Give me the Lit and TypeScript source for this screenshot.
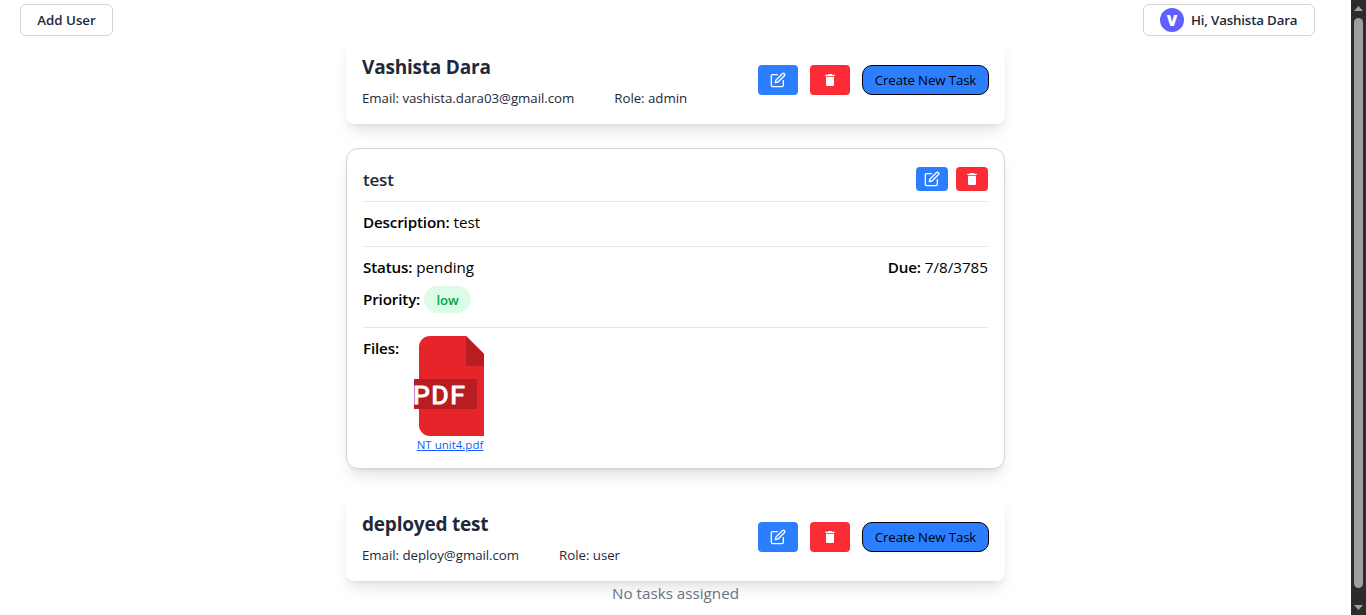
import { LitElement, html, svg, css, nothing } from "lit";
import { customElement, property } from "lit/decorators.js";

interface Task {
  title: string;
  description: string;
  status: string;
  due: string;
  priority: string;
  files: string[];
}

interface User {
  name: string;
  email: string;
  role: string;
  tasks: Task[];
}

const users: User[] = [
  {
    name: "Vashista Dara",
    email: "vashista.dara03@gmail.com",
    role: "admin",
    tasks: [
      {
        title: "test",
        description: "test",
        status: "pending",
        due: "7/8/3785",
        priority: "low",
        files: ["NT unit4.pdf"],
      },
    ],
  },
  { name: "deployed test", email: "deploy@gmail.com", role: "user", tasks: [] },
];

const editIcon = svg`<svg width="16" height="16" viewBox="0 0 24 24" fill="none" stroke="currentColor" stroke-width="2" stroke-linecap="round" stroke-linejoin="round">
  <path d="M11 4H4a2 2 0 0 0-2 2v14a2 2 0 0 0 2 2h14a2 2 0 0 0 2-2v-7"></path>
  <path d="M18.5 2.5a2.121 2.121 0 0 1 3 3L12 15l-4 1 1-4 9.5-9.5z"></path>
</svg>`;

const trashIcon = svg`<svg width="16" height="16" viewBox="0 0 24 24" fill="currentColor">
  <path d="M6 19c0 1.1.9 2 2 2h8c1.1 0 2-.9 2-2V7H6v12zM19 4h-3.5l-1-1h-5l-1 1H5v2h14V4z"></path>
</svg>`;

const pdfIcon = svg`<svg width="70" height="100" viewBox="0 0 70 100">
  <path d="M16 0H52L70 18V100H16A11 11 0 0 1 5 89V11A11 11 0 0 1 16 0Z" fill="#e5252a"></path>
  <path d="M52 0L70 18V30H54A2 2 0 0 1 52 28Z" fill="#b71d21"></path>
  <path d="M0 43H61A2 2 0 0 1 63 45V71A2 2 0 0 1 61 73H0Z" fill="#b71d21"></path>
  <text class="pdf" x="-1" y="67.5" textLength="52" lengthAdjust="spacing">PDF</text>
</svg>`;

const base = css`
  * {
    box-sizing: border-box;
    margin: 0;
  }
  svg {
    display: block;
    flex: none;
  }
  button {
    font: inherit;
    color: inherit;
    padding: 0;
    border: 0;
    display: flex;
    align-items: center;
    justify-content: center;
    white-space: nowrap;
  }
  .icon {
    width: 40px;
    height: 30px;
    border-radius: 4px;
    color: #fff;
  }
  .small {
    width: 32px;
    height: 24px;
  }
  .edit {
    background: #2b7fff;
  }
  .delete {
    background: #fb2c36;
  }
`;

@customElement("task-card")
class TaskCard extends LitElement {
  @property({ attribute: false }) task!: Task;

  static styles = [
    base,
    css`
      :host {
        display: block;
        box-sizing: border-box;
        padding: 16px;
        border: 1px solid #d1d5dc;
        border-radius: 12px;
        background: #fff;
        box-shadow: 0 10px 15px -3px rgb(0 0 0 / 0.1), 0 4px 6px -4px rgb(0 0 0 / 0.1);
      }
      .head,
      .row,
      .actions {
        display: flex;
        justify-content: space-between;
        align-items: center;
      }
      .actions {
        gap: 8px;
      }
      .head {
        height: 37px;
        padding-bottom: 8px;
        border-bottom: 1px solid #e5e7eb;
      }
      h3 {
        font-size: 17px;
        line-height: 28px;
        font-weight: 600;
        letter-spacing: -0.2px;
        color: #1e2939;
        padding-top: 1px;
      }
      b {
        font-weight: 600;
        letter-spacing: -0.15px;
      }
      .desc {
        padding: 8px 0 12px;
        border-bottom: 1px solid #e5e7eb;
      }
      .meta {
        display: flex;
        flex-direction: column;
        gap: 8px;
        padding: 8px 0 16px;
        border-bottom: 1px solid #e5e7eb;
      }
      .line {
        height: 24px;
        line-height: 24px;
      }
      .priority {
        display: flex;
        align-items: center;
        gap: 4px;
      }
      .badge {
        width: 47px;
        height: 27px;
        border-radius: 14px;
        background: #dcfce7;
        color: #00a63e;
        font-size: 13.2px;
        line-height: 28px;
        font-weight: 600;
        text-align: center;
      }
      .files {
        display: flex;
        gap: 16px;
        padding-top: 8px;
      }
      .files .line {
        width: 35px;
      }
      .file {
        width: 70px;
      }
      .pdf {
        font-family: "Roboto", sans-serif;
        font-size: 26.5px;
        font-weight: 400;
        fill: #fff;
        stroke: #fff;
        stroke-width: 1.1px;
        stroke-linejoin: round;
      }
      a {
        display: flex;
        justify-content: center;
        width: 72px;
        padding-top: 1px;
        font-size: 11.5px;
        line-height: 15px;
        white-space: nowrap;
        color: #155dfc;
      }
    `,
  ];

  render() {
    const t = this.task;
    return html`
      <div class="head">
        <h3>${t.title}</h3>
        <div class="actions">
          <button class="icon small edit" aria-label="Edit task">${editIcon}</button>
          <button class="icon small delete" aria-label="Delete task">${trashIcon}</button>
        </div>
      </div>
      <div class="desc"><p class="line"><b>Description:</b> ${t.description}</p></div>
      <div class="meta">
        <div class="row">
          <p class="line"><b>Status:</b> ${t.status}</p>
          <p class="line"><b>Due:</b> ${t.due}</p>
        </div>
        <div class="line priority"><b>Priority:</b><span class="badge">${t.priority}</span></div>
      </div>
      <div class="files">
        <b class="line">Files:</b>
        ${t.files.map((f) => html`<div class="file">${pdfIcon}<a href="#">${f}</a></div>`)}
      </div>
    `;
  }
}

@customElement("user-card")
class UserCard extends LitElement {
  @property({ attribute: false }) user!: User;

  static styles = [
    base,
    css`
      :host {
        display: flex;
        justify-content: space-between;
        align-items: center;
        box-sizing: border-box;
        height: 88px;
        padding: 16px;
        border-radius: 8px;
        background: #fff;
        color: #1e2939;
        box-shadow: 0 10px 15px -3px rgb(0 0 0 / 0.1), 0 4px 6px -4px rgb(0 0 0 / 0.1);
      }
      h2 {
        padding-top: 2px;
        font-size: 19px;
        line-height: 26px;
        font-weight: 700;
        letter-spacing: -0.2px;
        margin-bottom: 8px;
      }
      .info {
        display: flex;
        gap: 40px;
        font-size: 13.3px;
        line-height: 20px;
        letter-spacing: -0.05px;
      }
      .actions {
        display: flex;
        gap: 12px;
      }
      .create {
        width: 127px;
        height: 30px;
        border: 1px solid #000;
        border-radius: 10px;
        background: #2b7fff;
        color: #000;
        font-size: 13.3px;
        letter-spacing: -0.15px;
      }
    `,
  ];

  render() {
    const u = this.user;
    return html`
      <div>
        <h2>${u.name}</h2>
        <div class="info"><span>Email: ${u.email}</span><span>Role: ${u.role}</span></div>
      </div>
      <div class="actions">
        <button class="icon edit" aria-label="Edit user">${editIcon}</button>
        <button class="icon delete" aria-label="Delete user">${trashIcon}</button>
        <button class="create">Create New Task</button>
      </div>
    `;
  }
}

@customElement("app-root")
class AppRoot extends LitElement {
  static styles = [
    base,
    css`
      :host {
        display: flex;
        height: 615px;
        overflow: hidden;
        background: #fff;
        color: #000;
        font-family: "Open Sans", "Noto Sans", sans-serif;
        font-size: 15.2px;
        line-height: 24px;
      }
      .page {
        flex: 1;
      }
      header {
        display: flex;
        justify-content: space-between;
        height: 36px;
        padding: 4px 36px 0 20px;
      }
      .outline {
        height: 32px;
        border: 1px solid #d1d5dc;
        border-radius: 6px;
        background: #fff;
        color: #1e2939;
        font-size: 13.3px;
        font-weight: 600;
      }
      .add {
        width: 93px;
      }
      .profile {
        width: 172px;
        gap: 7px;
        padding-left: 16px;
        justify-content: flex-start;
        letter-spacing: -0.17px;
      }
      .avatar {
        display: flex;
        align-items: center;
        justify-content: center;
        width: 24px;
        height: 24px;
        border-radius: 50%;
        background: #615fff;
        color: #fff;
        font-size: 15.2px;
        font-weight: 800;
      }
      main {
        width: 659px;
        margin: 0 auto;
      }
      section {
        margin-bottom: 24px;
      }
      .tasks {
        display: grid;
        gap: 24px;
        padding-top: 24px;
      }
      .empty {
        text-align: center;
        color: #6a7282;
      }
      .scrollbar {
        display: flex;
        flex-direction: column;
        align-items: center;
        width: 15px;
        padding-top: 6px;
        background: #2c2c2c;
      }
      .thumb {
        width: 9px;
        height: 570px;
        margin: 7px 0 17px;
        border-radius: 5px;
        background: #9f9f9f;
      }
    `,
  ];

  render() {
    return html`
      <div class="page">
        <header>
          <button class="outline add">Add User</button>
          <button class="outline profile"><span class="avatar">V</span><span>Hi, Vashista Dara</span></button>
        </header>
        <main>
          ${users.map(
            (u) => html`<section>
              <user-card .user=${u}></user-card>
              ${u.tasks.length
                ? html`<div class="tasks">${u.tasks.map((t) => html`<task-card .task=${t}></task-card>`)}</div>`
                : html`<p class="empty">No tasks assigned</p>`}
            </section>`
          )}
        </main>
      </div>
      <div class="scrollbar">
        <svg width="9" height="5" viewBox="0 0 9 5"><path d="M0 5L4.5 0L9 5Z" fill="#9f9f9f"></path></svg>
        <div class="thumb"></div>
        <svg width="9" height="5" viewBox="0 0 9 5"><path d="M0 0L4.5 5L9 0Z" fill="#9f9f9f"></path></svg>
      </div>
    `;
  }
}
